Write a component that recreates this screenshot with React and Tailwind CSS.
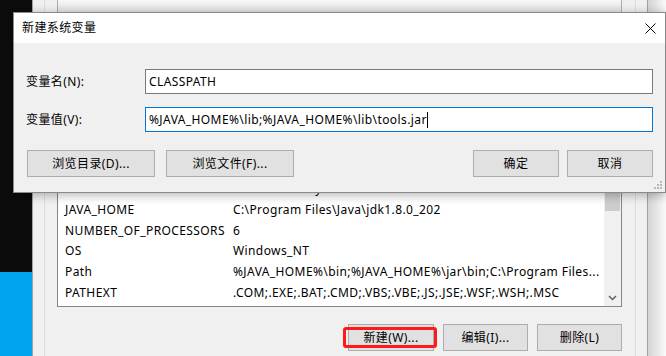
import React from 'react';

const rows = [
  ['DriverData', 'C:\\Windows\\System32\\Drivers\\DriverData'],
  ['JAVA_HOME', 'C:\\Program Files\\Java\\jdk1.8.0_202'],
  ['NUMBER_OF_PROCESSORS', '6'],
  ['OS', 'Windows_NT'],
  ['Path', '%JAVA_HOME%\\bin;%JAVA_HOME%\\jar\\bin;C:\\Program Files...'],
  ['PATHEXT', '.COM;.EXE;.BAT;.CMD;.VBS;.VBE;.JS;.JSE;.WSF;.WSH;.MSC'],
];

const Btn = ({ w, children }) => (
  <button className={`${w} h-[27px] bg-[#e1e1e1] border border-[#adadad] text-[12px] text-black flex items-center justify-center`}>
    {children}
  </button>
);

const App = () => {
  return (
    <div className="relative w-[666px] h-[356px] overflow-hidden flex bg-white font-['Noto_Sans','Noto_Sans_CJK_SC',sans-serif] text-[12px] tracking-[0.4px] text-black">
      {/* desktop strip */}
      <div className="w-[32px] flex flex-col shrink-0">
        <div className="flex-1 bg-[#0c0c0c]"></div>
        <div className="h-[84px] bg-[#00a4ef]"></div>
      </div>

      {/* environment variables window behind */}
      <div className="w-[616px] shrink-0 bg-[#f0f0f0] border-l border-r border-[#a0a0a0] px-[11px] flex">
        <div className="flex-1 border-l border-r border-[#dcdcdc] pl-[12px] pr-[13px] flex flex-col">
          <div className="h-[12px] border-x border-[#adadad] bg-linear-to-b from-[#f8f8f8] to-[#e2e2e2]"></div>

          <div className="mt-[130px] h-[165px] border border-[#828790] bg-white flex">
            <div className="flex-1 flex flex-col justify-end pb-[3px] pl-[7px] overflow-hidden">
              {rows.map(([k, v]) => (
                <div key={k} className="h-[20.7px] flex items-center whitespace-nowrap">
                  <span className="w-[168px] shrink-0">{k}</span>
                  <span>{v}</span>
                </div>
              ))}
            </div>
            <div className="w-[17px] bg-[#f0f0f0] flex flex-col shrink-0">
              <div className="mt-[7px] mx-[1px] h-[61px] bg-[#cdcdcd]"></div>
              <div className="flex-1"></div>
              <div className="h-[17px] flex items-center justify-center">
                <svg width="9" height="6" viewBox="0 0 9 6">
                  <path d="M1 1 L4.5 4.5 L8 1" fill="none" stroke="#606060" strokeWidth="1.5" />
                </svg>
              </div>
            </div>
          </div>

          <div className="mt-[17px] flex justify-end gap-[9px]">
            <div className="relative">
              <Btn w="w-[86px]">新建(W)...</Btn>
              <div className="absolute left-[-5px] right-[-3px] top-[3px] bottom-[3px] border-[3px] border-[#ff1a1a] rounded-[3px]"></div>
            </div>
            <Btn w="w-[85px]">编辑(I)...</Btn>
            <Btn w="w-[85px]">删除(L)</Btn>
          </div>
        </div>
      </div>

      <div className="flex-1 bg-linear-to-r from-[#d4d4d4] to-[#fafafa]"></div>

      {/* new system variable dialog */}
      <div className="absolute left-[13px] top-[12px] w-[653px] h-[181px] border border-[#8a8a8a] bg-[#f0f0f0] shadow-[0_2px_10px_rgba(0,0,0,0.3)] flex flex-col">
        <div className="h-[30px] bg-white flex items-center justify-between">
          <span className="pl-[8px] text-[12px]">新建系统变量</span>
          <div className="w-[30px] h-[30px] flex items-center justify-center">
            <svg width="11" height="11" viewBox="0 0 11 11">
              <path d="M0.5 0.5 L10.5 10.5 M10.5 0.5 L0.5 10.5" stroke="#000" strokeWidth="1" />
            </svg>
          </div>
        </div>

        <div className="relative flex-1 px-[12px] pt-[26px]">
          <div className="flex items-center h-[25px]">
            <span className="w-[119px] shrink-0">变量名(N):</span>
            <div className="flex-1 h-[25px] border border-[#7a7a7a] bg-white flex items-center pl-[3px]">CLASSPATH</div>
          </div>
          <div className="mt-[13px] flex items-center h-[25px]">
            <span className="w-[119px] shrink-0">变量值(V):</span>
            <div className="flex-1 h-[25px] border border-[#0078d7] bg-white flex items-center pl-[3px] whitespace-nowrap">
              <span>%JAVA_HOME%\lib;%JAVA_HOME%\lib\tools.jar</span>
              <span className="w-px h-[16px] bg-black"></span>
            </div>
          </div>
          <div className="mt-[18px] flex justify-between">
            <div className="flex gap-[11px] pl-[1px]">
              <Btn w="w-[128px]">浏览目录(D)...</Btn>
              <Btn w="w-[128px]">浏览文件(F)...</Btn>
            </div>
            <div className="flex gap-[8px]">
              <Btn w="w-[86px]">确定</Btn>
              <Btn w="w-[86px]">取消</Btn>
            </div>
          </div>

          <svg className="absolute right-[2px] bottom-[2px]" width="10" height="10" viewBox="0 0 10 10">
            <rect x="7" y="1" width="2" height="2" fill="#b8b8b8" />
            <rect x="4" y="4" width="2" height="2" fill="#b8b8b8" />
            <rect x="7" y="4" width="2" height="2" fill="#b8b8b8" />
            <rect x="1" y="7" width="2" height="2" fill="#b8b8b8" />
            <rect x="4" y="7" width="2" height="2" fill="#b8b8b8" />
            <rect x="7" y="7" width="2" height="2" fill="#b8b8b8" />
          </svg>
        </div>
      </div>
    </div>
  );
};

export default App;
